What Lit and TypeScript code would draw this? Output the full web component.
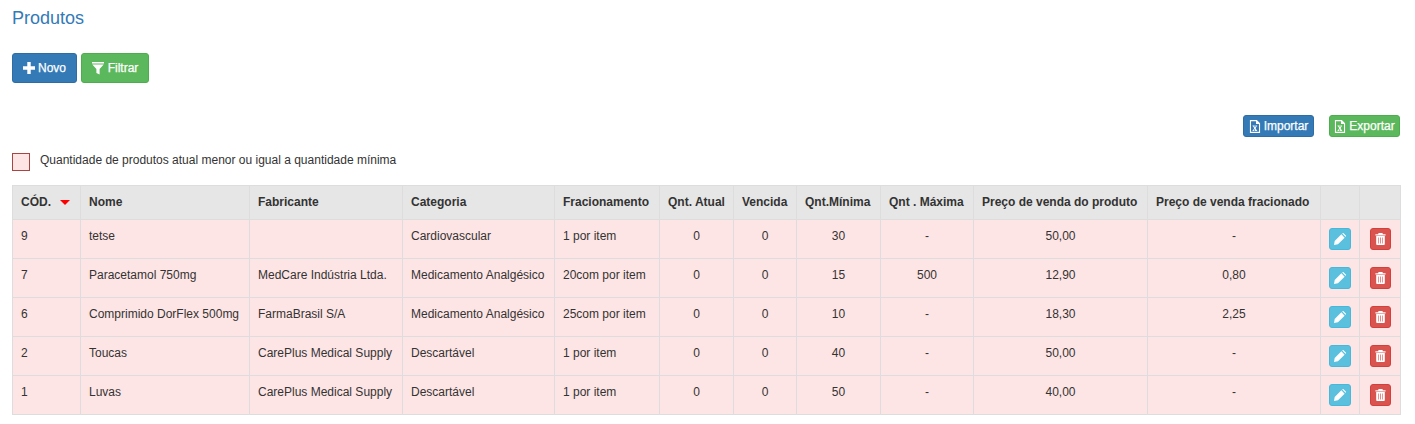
import { LitElement, html, css, svg } from "lit";
import { customElement } from "lit/decorators.js";

const plus = svg`<path d="M5 0h4v5h5v4H9v5H5V9H0V5h5z" fill="#fff"/>`;
const funnel = svg`<path d="M0 0h12v1.4H0zM0.3 2.4h11.4L7.6 7v5.6L4.4 11V7z" fill="#fff"/>`;
const excel = svg`<path fill-rule="evenodd" d="M1 0h7.5L12 3.5V14H1zM2.2 1.2v11.6h8.6V4.4H7.6V1.2zM3.8 6h2.4v.7h-.5l.8 1.4.8-1.4h-.5V6h2v.7h-.5L7.2 9l1.2 2h.4v.8H6.4V11h.5L6.1 9.7 5.3 11h.5v.8h-2V11h.5l1.3-2.2-1.2-2.1h-.6z" fill="#fff"/>`;
const pencil = svg`<path d="M8.6 1.6 12.4 5.4 4.6 13.2 0 14 .8 9.4zM9.6.6l.4-.4c.3-.3.8-.3 1.1 0l2.7 2.7c.3.3.3.8 0 1.1l-.4.4z" fill="#fff"/>`;
const trash = svg`<path fill-rule="evenodd" d="M4.2 0h4.6l.5 1.4h3.2v1.5H.5V1.4h3.2zM1.4 3.6h10.2V13a1 1 0 0 1-1 1H2.4a1 1 0 0 1-1-1zM3.7 5.2v7.2h.7V5.2zM6.1 5.2v7.2h.8V5.2zM8.6 5.2v7.2h.7V5.2z" fill="#fff"/>`;

const widths = [68, 169, 153, 152, 105, 74, 63, 84, 93, 174, 173, 39, 41];
const heads = ["Nome","Fabricante","Categoria","Fracionamento","Qnt. Atual","Vencida","Qnt.Mínima","Qnt . Máxima","Preço de venda do produto","Preço de venda fracionado","",""];
const centerFrom = 4;
const rows = [
  ["9","tetse","","Cardiovascular","1 por item","0","0","30","-","50,00","-"],
  ["7","Paracetamol 750mg","MedCare Indústria Ltda.","Medicamento Analgésico","20com por item","0","0","15","500","12,90","0,80"],
  ["6","Comprimido DorFlex 500mg","FarmaBrasil S/A","Medicamento Analgésico","25com por item","0","0","10","-","18,30","2,25"],
  ["2","Toucas","CarePlus Medical Supply","Descartável","1 por item","0","0","40","-","50,00","-"],
  ["1","Luvas","CarePlus Medical Supply","Descartável","1 por item","0","0","50","-","40,00","-"],
];

@customElement("app-root")
export class AppRoot extends LitElement {
  static styles = css`
    :host { display: block; font-family: "Liberation Sans", Arial, sans-serif; font-size: 12px; color: #333; padding: 0 15px 0 12px; }
    h1 { margin: 0; padding-top: 8px; font-size: 18px; line-height: 20px; font-weight: 400; color: #337ab7; }
    .actions { display: flex; gap: 4px; margin-top: 25px; }
    .btn { display: inline-flex; align-items: center; justify-content: center; box-sizing: border-box; border: 1px solid; border-radius: 3px; color: #fff; font-weight: 400; -webkit-text-stroke: 0.25px #fff; font-size: 12px; height: 30px; }
    .blue { background: #337ab7; border-color: #2e6da4; }
    .green { background: #5cb85c; border-color: #4cae4c; }
    .novo { width: 65px; gap: 3px; }
    .filtrar { width: 68px; gap: 4px; }
    .io { display: flex; justify-content: flex-end; gap: 15px; margin-top: 32px; }
    .small { width: 71px; height: 22px; gap: 3px; font-size: 12px; }
    .legend { display: flex; gap: 10px; margin-top: 16px; height: 32px; }
    .swatch { width: 18px; height: 18px; box-sizing: border-box; border: 1px solid #a94442; background: #fee5e5; }
    .legend span { line-height: 14px; }
    table { border-collapse: collapse; table-layout: fixed; width: 1388px; }
    th, td { border: 1px solid #ddd; padding: 0 8px; text-align: left; white-space: nowrap; overflow: hidden; }
    th { background: #e6e6e6; height: 34px; font-weight: 700; color: #333; padding-bottom: 1px; box-sizing: border-box; }
    td { background: #fee5e5; vertical-align: middle; padding-bottom: 7px; box-sizing: border-box; }
    tbody td { height: 39px; }
    .c { text-align: center; }
    .sort { display: inline-block; margin-left: 9px; width: 0; height: 0; border: 5px solid transparent; border-top-color: #f00; border-bottom: 0; vertical-align: 1px; }
    td.act { padding: 8px 0 0; text-align: center; vertical-align: top; }
    .ib { display: inline-flex; align-items: center; justify-content: center; height: 22px; box-sizing: border-box; border: 1px solid; border-radius: 3px; vertical-align: top; }
    .info { width: 22px; background: #5bc0de; border-color: #46b8da; }
    .danger { width: 21px; background: #d9534f; border-color: #d43f3a; }
    svg { display: block; }
  `;
  render() {
    return html`
      <h1>Produtos</h1>
      <div class="actions">
        <div class="btn blue novo"><svg width="12" height="12" viewBox="0 0 14 14">${plus}</svg>Novo</div>
        <div class="btn green filtrar"><svg width="12" height="13" viewBox="0 0 12 13">${funnel}</svg>Filtrar</div>
      </div>
      <div class="io">
        <div class="btn blue small"><svg width="12" height="13" viewBox="0 0 13 14">${excel}</svg>Importar</div>
        <div class="btn green small"><svg width="12" height="13" viewBox="0 0 13 14">${excel}</svg>Exportar</div>
      </div>
      <div class="legend"><div class="swatch"></div><span>Quantidade de produtos atual menor ou igual a quantidade mínima</span></div>
      <table>
        <colgroup>${widths.map((w) => html`<col style="width:${w}px" />`)}</colgroup>
        <thead><tr>
          <th>CÓD.<i class="sort"></i></th>
          ${heads.map((h) => html`<th>${h}</th>`)}
        </tr></thead>
        <tbody>
          ${rows.map((r) => html`<tr>
            ${r.map((v, i) => html`<td class=${i > centerFrom ? "c" : ""}>${v}</td>`)}
            <td class="act"><span class="ib info"><svg width="12" height="12" viewBox="0 0 14 14">${pencil}</svg></span></td>
            <td class="act"><span class="ib danger"><svg width="11" height="12" viewBox="0 0 13 14">${trash}</svg></span></td>
          </tr>`)}
        </tbody>
      </table>
    `;
  }
}
